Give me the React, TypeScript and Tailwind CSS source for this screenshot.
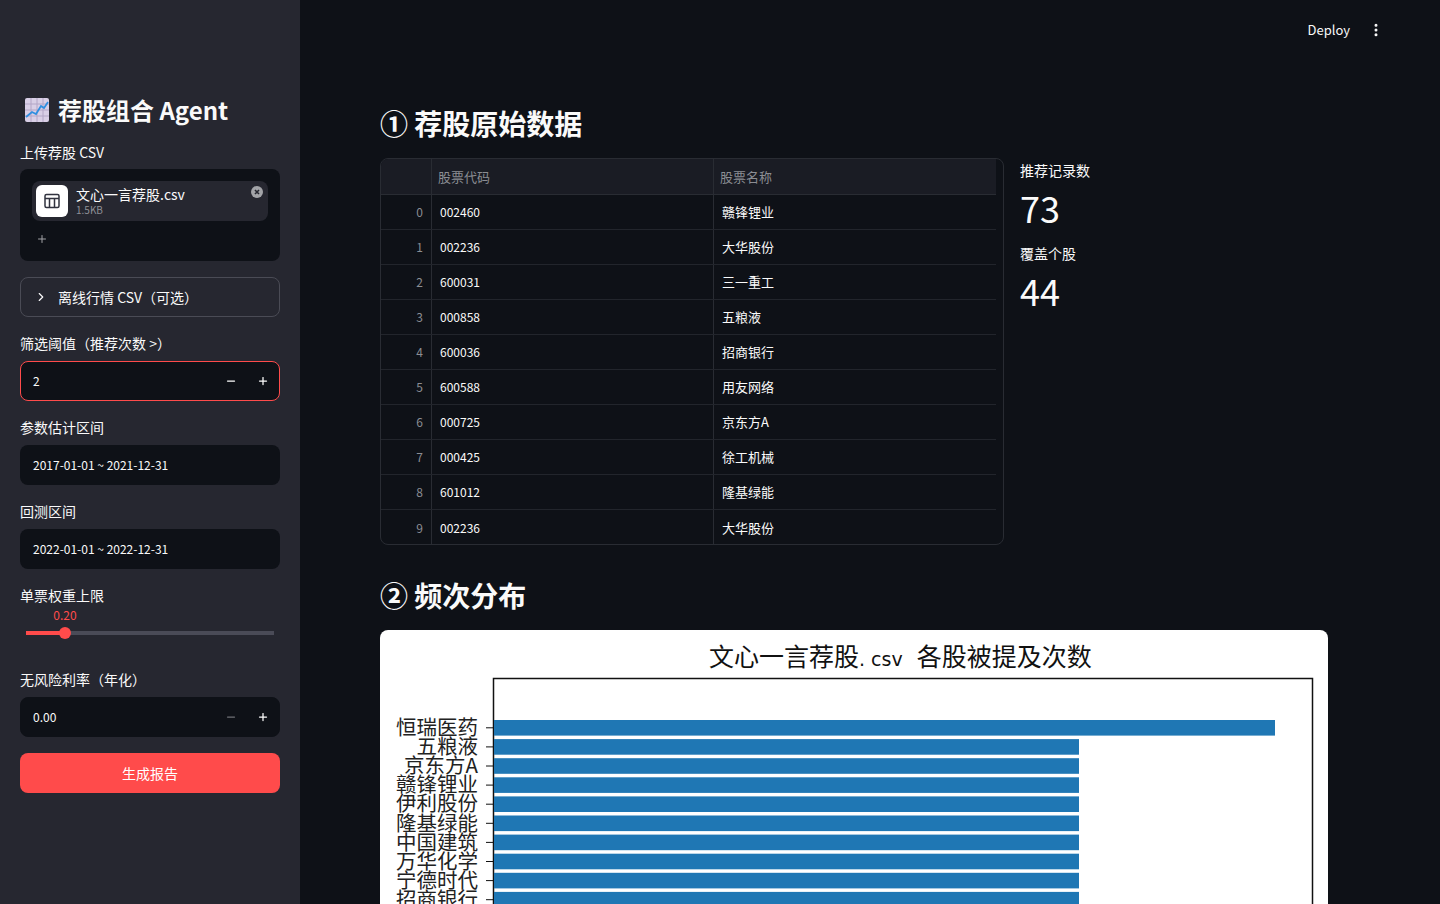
import { ChevronRight, EllipsisVertical, Minus, Plus } from 'lucide-react';

const FONT = '[font-family:"Noto_Sans_CJK_SC","Noto_Sans",sans-serif]';

const ROWS = [
  ['002460', '赣锋锂业'],
  ['002236', '大华股份'],
  ['600031', '三一重工'],
  ['000858', '五粮液'],
  ['600036', '招商银行'],
  ['600588', '用友网络'],
  ['000725', '京东方A'],
  ['000425', '徐工机械'],
  ['601012', '隆基绿能'],
  ['002236', '大华股份'],
];

// top 10 of the chart, [label, bar width]
const BARS: [string, number][] = [
  ['恒瑞医药', 781],
  ['五粮液', 585],
  ['京东方A', 585],
  ['赣锋锂业', 585],
  ['伊利股份', 585],
  ['隆基绿能', 585],
  ['中国建筑', 585],
  ['万华化学', 585],
  ['宁德时代', 585],
  ['招商银行', 585],
];

function Label({ children }: { children: React.ReactNode }) {
  return <div className="h-[18px] text-[14px] leading-[18px] text-[#fafafa]">{children}</div>;
}

function NumberInput({ value, focused, minusDim }: { value: string; focused?: boolean; minusDim?: boolean }) {
  return (
    <div
      className={`mt-[9px] flex h-10 items-center rounded-lg border bg-[#0e1117] pl-3 text-[12px] text-[#fafafa] ${
        focused ? 'border-[#ff4b4b]' : 'border-[#0e1117]'
      }`}
    >
      <span className="flex-1">{value}</span>
      <span className="flex w-8 justify-center">
        <Minus size={12} strokeWidth={2.5} className={minusDim ? 'text-[#6f7076]' : 'text-white'} />
      </span>
      <span className="flex w-8 justify-center">
        <Plus size={12} strokeWidth={2.5} className="text-white" />
      </span>
    </div>
  );
}

function TextBox({ value }: { value: string }) {
  return (
    <div className="mt-[9px] flex h-10 items-center rounded-lg bg-[#0e1117] pl-[13px] text-[12px] text-[#fafafa]">
      {value}
    </div>
  );
}

function Sidebar() {
  return (
    <aside className="flex h-[904px] w-[300px] shrink-0 flex-col bg-[#262730] px-5 pt-[93px]">
      <div className="flex h-[34px] items-center gap-[9px] pl-[5px] text-[24px] font-bold leading-[34px] text-[#fafafa]">
        <svg width="24" height="24" viewBox="0 0 24 24">
          <rect width="24" height="24" rx="2" fill="#d9cfe6" />
          <path d="M0 6h24M0 12h24M0 18h24M6 0v24M12 0v24M18 0v24" stroke="#b3a6c6" strokeWidth="1" />
          <path d="M1 19l6-5 4 2 5-8 3 2 4-6" fill="none" stroke="#2f8fe0" strokeWidth="1.8" />
        </svg>
        <span>荐股组合 Agent</span>
      </div>
      <div className="mt-4">
        <Label>上传荐股 CSV</Label>
      </div>
      <div className="mt-2 h-[92px] rounded-lg bg-[#0e1117] p-3">
        <div className="relative flex h-10 items-center rounded-lg bg-[#262730] pl-1">
          <div className="flex h-8 w-8 items-center justify-center rounded-md bg-white">
            <svg width="18" height="18" viewBox="0 0 18 18" fill="none" stroke="#31333f" strokeWidth="1.5">
              <rect x="2" y="2.5" width="14" height="13" rx="1.5" />
              <path d="M2 6.5h14M6.5 6.5v9M11.5 6.5v9" />
            </svg>
          </div>
          <div className="ml-2">
            <div className="text-[14px] leading-[17px] text-[#fafafa]">文心一言荐股.csv</div>
            <div className="text-[10px] leading-[13px] text-[#8e9097]">1.5KB</div>
          </div>
          <svg className="absolute right-[5px] top-[5px]" width="12" height="12" viewBox="0 0 12 12">
            <circle cx="6" cy="6" r="6" fill="#a3a4a8" />
            <path d="M4 4l4 4M8 4l-4 4" stroke="#262730" strokeWidth="1.6" />
          </svg>
        </div>
        <div className="mt-[12px] flex w-5 justify-center pl-0">
          <Plus size={12} strokeWidth={2} className="text-[#a3a4a8]" />
        </div>
      </div>
      <div className="mt-4 flex h-10 items-center rounded-lg border border-[#4a4b55] pl-[13px] text-[14px] text-[#fafafa]">
        <ChevronRight size={14} strokeWidth={2} />
        <span className="ml-[10px]">离线行情 CSV（可选）</span>
      </div>
      <div className="mt-[17px]">
        <Label>筛选阈值（推荐次数 &gt;）</Label>
      </div>
      <NumberInput value="2" focused />
      <div className="mt-[17px]">
        <Label>参数估计区间</Label>
      </div>
      <TextBox value="2017-01-01 ~ 2021-12-31" />
      <div className="mt-[17px]">
        <Label>回测区间</Label>
      </div>
      <TextBox value="2022-01-01 ~ 2022-12-31" />
      <div className="mt-[17px]">
        <Label>单票权重上限</Label>
      </div>
      <div className="mt-[3px] h-[15px] w-[90px] text-center text-[12px] leading-[15px] text-[#ff4b4b]">0.20</div>
      <div className="mt-[9px] px-[6px]">
        <div className="relative h-1 bg-[#4a4b57]">
          <div className="h-1 w-[39px] bg-[#ff4b4b]" />
          <div className="absolute left-[33px] top-[-4px] h-3 w-3 rounded-full bg-[#ff4b4b]" />
        </div>
      </div>
      <div className="mt-[35px]">
        <Label>无风险利率（年化）</Label>
      </div>
      <NumberInput value="0.00" minusDim />
      <div className="mt-4 flex h-10 items-center justify-center rounded-lg bg-[#ff4b4b] text-[14px] text-white">
        生成报告
      </div>
    </aside>
  );
}

function DataTable() {
  return (
    <div className="h-[387px] w-[624px] shrink-0 overflow-hidden rounded-lg border border-[#292c33] text-[12px]">
      <div className="flex h-[36px] w-[615px] border-b border-[#292c33] bg-[#1a1c24] text-[13px] text-[#8b8d93]">
        <div className="w-[51px] border-r border-[#292c33]" />
        <div className="flex w-[282px] items-center border-r border-[#292c33] pl-[6px]">股票代码</div>
        <div className="flex flex-1 items-center pl-[6px]">股票名称</div>
      </div>
      {ROWS.map((r, i) => (
        <div key={i} className="flex h-[35px] w-[615px] border-b border-[#22252c] text-[#fafafa] last:border-b-0">
          <div className="flex w-[51px] items-center justify-end border-r border-[#292c33] pr-2 text-[#8b8d93]">{i}</div>
          <div className="flex w-[282px] items-center border-r border-[#292c33] pl-2">{r[0]}</div>
          <div className="flex flex-1 items-center pl-2 text-[13px]">{r[1]}</div>
        </div>
      ))}
    </div>
  );
}

function Chart() {
  return (
    <div className="h-[300px] w-[948px] overflow-hidden rounded-lg bg-white">
      <svg width="948" height="300" viewBox="0 0 948 300" className="block">
        <text x="329" y="36" fontSize="25" fill="#111" fontFamily="Noto Sans CJK SC, sans-serif">
          文心一言荐股
          <tspan fontFamily="DejaVu Sans" fontSize="19">. csv</tspan>
          <tspan dx="14">各股被提及次数</tspan>
        </text>
        <rect x="113.5" y="48.5" width="819" height="300" fill="none" stroke="#111" strokeWidth="1.5" />
        {BARS.map(([name, w], i) => {
          const y = 90 + i * 19.1;
          return (
            <g key={name}>
              <rect x="114" y={y} width={w} height="15.6" fill="#1f77b4" />
              <line x1="106" x2="113" y1={y + 7.8} y2={y + 7.8} stroke="#111" strokeWidth="1" />
              <text x="98" y={y + 15} textAnchor="end" fontSize="20.5" fill="#222" fontFamily="Noto Sans CJK SC, sans-serif">
                {name}
              </text>
            </g>
          );
        })}
      </svg>
    </div>
  );
}

export default function App() {
  return (
    <div className={`flex h-[904px] w-[1440px] overflow-hidden bg-[#0e1117] ${FONT}`}>
      <Sidebar />
      <main className="min-w-0 flex-1">
        <header className="flex h-[60px] items-center justify-end pr-[56px] text-[13px] text-[#fafafa]">
          <span>Deploy</span>
          <EllipsisVertical size={16} strokeWidth={2.5} className="ml-[18px]" />
        </header>
        <div className="pl-20 pr-[32px] pt-[43px]">
          <h2 className="h-10 text-[28px] font-bold leading-10 text-[#fafafa]">① 荐股原始数据</h2>
          <div className="mt-[15px] flex gap-4">
            <DataTable />
            <div className="text-[#fafafa]">
              <div className="mt-[3px] text-[14px] leading-[18px]">推荐记录数</div>
              <div className="mt-[4px] text-[36px] leading-[48px]">73</div>
              <div className="mt-[13px] text-[14px] leading-[18px]">覆盖个股</div>
              <div className="mt-[4px] text-[36px] leading-[48px]">44</div>
            </div>
          </div>
          <h2 className="mt-[30px] h-10 text-[28px] font-bold leading-10 text-[#fafafa]">② 频次分布</h2>
          <div className="mt-[15px]">
            <Chart />
          </div>
        </div>
      </main>
    </div>
  );
}
